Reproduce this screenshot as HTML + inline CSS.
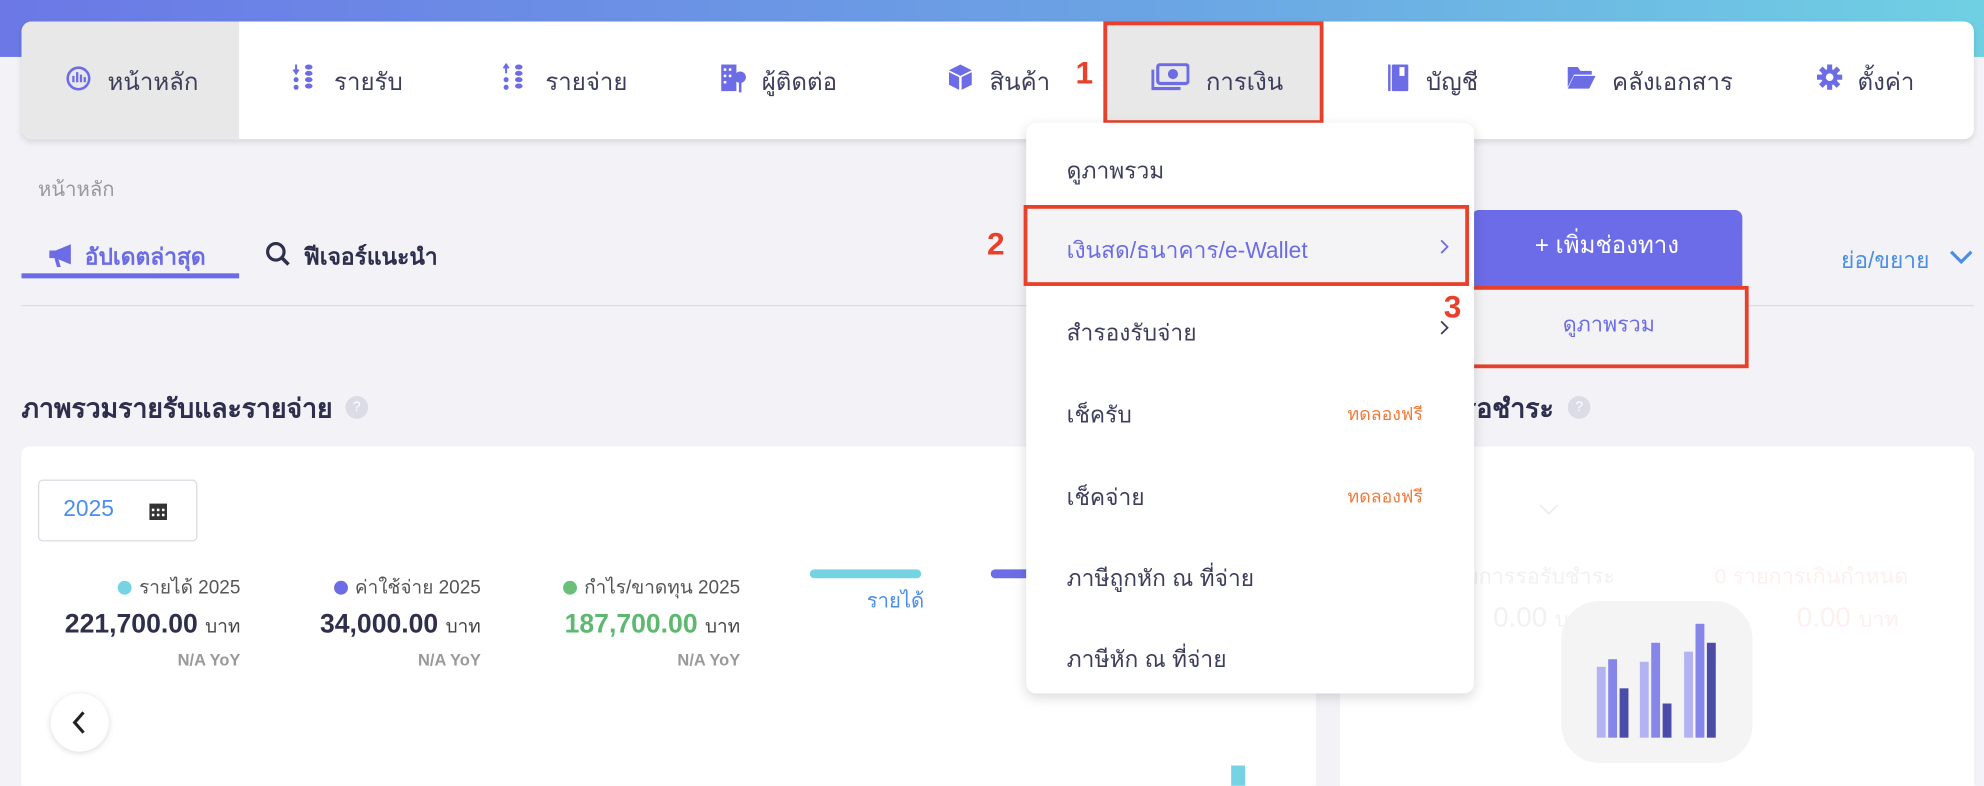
<!DOCTYPE html>
<html><head><meta charset="utf-8">
<style>
*{margin:0;padding:0;box-sizing:border-box}
html,body{width:1984px;height:786px;overflow:hidden;background:#f3f3f7;font-family:"Liberation Sans","DejaVu Sans","Noto Sans CJK SC",sans-serif}
#w{position:absolute;left:0;top:0;width:1568px;height:621px;transform:scale(1.26531);transform-origin:0 0;overflow:hidden}
.a{position:absolute;white-space:nowrap}
.nav{font-size:19px;color:#3d3d5c;top:50px}
.ic{position:absolute;color:#6c6ce6}
.red{position:absolute;border:3px solid #e8402a}
.num{position:absolute;color:#e8402a;font-weight:bold;font-size:25px}
.dd{font-size:18px;color:#3d3d5c;left:843px}
.lab{font-size:15px;color:#555;top:452px;text-align:right}
.val{font-size:21px;font-weight:bold;color:#2e2e4d;top:482px;text-align:right}
.val small{font-size:15px;font-weight:normal;color:#444}
.yoy{font-size:13px;color:#999;font-weight:bold;top:514px;text-align:right}
.dot{display:inline-block;width:11px;height:11px;border-radius:50%;margin-right:6px;vertical-align:-1px}
.bar{position:absolute;width:7px}
</style></head><body><div id="w">
<div class="a" style="left:0;top:0;width:1568px;height:45px;background:linear-gradient(90deg,#6b78e6,#6ba6e4 60%,#6fd0e3)"></div>
<div class="a" style="left:17px;top:17px;width:1543px;height:93px;background:#fff;border-radius:8px;box-shadow:0 2px 5px rgba(0,0,0,.12)"></div>
<div class="a" style="left:17px;top:17px;width:172px;height:93px;background:#e8e8e8;border-radius:8px 0 0 8px"></div>
<div class="a" style="left:872px;top:17px;width:173px;height:80px;background:#e8e8e8"></div>
<svg class="ic" style="left:52px;top:51px" width="20" height="22" viewBox="0 0 20 22"><circle cx="10" cy="11" r="8.5" fill="none" stroke="#6c6ce6" stroke-width="2"/><path d="M6 9v5M9 6v8M12 8v6M15 10v4" stroke="#6c6ce6" stroke-width="1.8"/></svg>
<svg class="ic" style="left:231px;top:50px" width="18" height="22" viewBox="0 0 18 22"><path d="M3 1v6M1 5l2 3 2-3" stroke="#6c6ce6" stroke-width="1.6" fill="none"/><circle cx="3" cy="13" r="2" fill="#6c6ce6"/><circle cx="3" cy="19" r="2" fill="#6c6ce6"/><g fill="#6c6ce6"><ellipse cx="13" cy="3" rx="3" ry="2"/><ellipse cx="13" cy="8" rx="3" ry="2"/><ellipse cx="13" cy="13" rx="3" ry="2"/><ellipse cx="13" cy="18" rx="3" ry="2"/></g></svg>
<svg class="ic" style="left:397px;top:50px" width="18" height="22" viewBox="0 0 18 22"><path d="M3 8V2M1 4l2-3 2 3" stroke="#6c6ce6" stroke-width="1.6" fill="none"/><circle cx="3" cy="13" r="2" fill="#6c6ce6"/><circle cx="3" cy="19" r="2" fill="#6c6ce6"/><g fill="#6c6ce6"><ellipse cx="13" cy="3" rx="3" ry="2"/><ellipse cx="13" cy="8" rx="3" ry="2"/><ellipse cx="13" cy="13" rx="3" ry="2"/><ellipse cx="13" cy="18" rx="3" ry="2"/></g></svg>
<svg class="ic" style="left:569px;top:50px" width="22" height="24" viewBox="0 0 22 24"><rect x="1" y="1" width="12" height="21" fill="#6c6ce6"/><g fill="#fff"><rect x="3" y="4" width="2" height="2"/><rect x="7" y="4" width="2" height="2"/><rect x="3" y="9" width="2" height="2"/><rect x="7" y="9" width="2" height="2"/><rect x="3" y="14" width="2" height="2"/></g><circle cx="16" cy="11" r="4.5" fill="#6c6ce6"/><path d="M16 14v9" stroke="#6c6ce6" stroke-width="2"/></svg>
<svg class="ic" style="left:749px;top:50px" width="20" height="22" viewBox="0 0 20 22"><path d="M10 1l9 4.5-9 4.5-9-4.5z" fill="#6c6ce6"/><path d="M1 7l8 4v10l-8-4zM19 7l-8 4v10l8-4z" fill="#6c6ce6"/></svg>
<svg class="ic" style="left:910px;top:50px" width="30" height="22" viewBox="0 0 30 22"><rect x="5" y="1" width="24" height="15" rx="2" fill="none" stroke="#6c6ce6" stroke-width="2.5"/><circle cx="17" cy="8.5" r="4" fill="#6c6ce6"/><path d="M1 5v15h22" fill="none" stroke="#6c6ce6" stroke-width="2.5"/></svg>
<svg class="ic" style="left:1097px;top:50px" width="17" height="23" viewBox="0 0 17 23"><rect x="3" y="1" width="13" height="21" rx="1" fill="#6c6ce6"/><rect x="0" y="1" width="2" height="21" fill="#6c6ce6"/><rect x="9" y="3" width="4" height="7" fill="#fff"/></svg>
<svg class="ic" style="left:1238px;top:51px" width="24" height="20" viewBox="0 0 24 20"><path d="M1 2h8l2 3h9v3H6L1 18z" fill="#6c6ce6"/><path d="M6 9h17l-5 10H1z" fill="#6c6ce6"/></svg>
<svg class="ic" style="left:1436px;top:51px" width="20" height="20" viewBox="0 0 20 20"><circle cx="10" cy="10" r="6.5" fill="#6c6ce6"/><g stroke="#6c6ce6" stroke-width="4"><path d="M10 0v20M0 10h20M3 3l14 14M17 3L3 17"/></g><circle cx="10" cy="10" r="3" fill="#fff"/></svg>
<div class="a nav" style="left:85px">หน้าหลัก</div>
<div class="a nav" style="left:264px">รายรับ</div>
<div class="a nav" style="left:431px">รายจ่าย</div>
<div class="a nav" style="left:602px">ผู้ติดต่อ</div>
<div class="a nav" style="left:782px">สินค้า</div>
<div class="a nav" style="left:953px">การเงิน</div>
<div class="a nav" style="left:1127px">บัญชี</div>
<div class="a nav" style="left:1274px">คลังเอกสาร</div>
<div class="a nav" style="left:1468px">ตั้งค่า</div>
<div class="red" style="left:872px;top:17px;width:174px;height:81px"></div>
<div class="num" style="left:850px;top:44px">1</div>
<div class="a" style="left:30px;top:138px;font-size:16px;color:#999">หน้าหลัก</div>
<svg class="a" style="left:38px;top:192px" width="22" height="20" viewBox="0 0 22 20"><path d="M1 6h5l12-5v16L6 12H1z" fill="#6c6ce6"/><path d="M5 12l2 7h3l-2-7" fill="#6c6ce6"/></svg>
<div class="a" style="left:67px;top:188px;font-size:18px;font-weight:bold;color:#6c6ce6">อัปเดตล่าสุด</div>
<div class="a" style="left:17px;top:216px;width:172px;height:4px;background:#6c6ce6"></div>
<svg class="a" style="left:209px;top:190px" width="22" height="22" viewBox="0 0 22 22"><circle cx="9" cy="9" r="6.5" fill="none" stroke="#2e2e4d" stroke-width="2.5"/><path d="M14 14l5 5" stroke="#2e2e4d" stroke-width="2.8"/></svg>
<div class="a" style="left:240px;top:188px;font-size:18px;font-weight:bold;color:#2e2e4d">ฟีเจอร์แนะนำ</div>
<div class="a" style="left:17px;top:241px;width:1543px;height:1px;background:#dcdce2"></div>
<div class="a" style="left:1455px;top:191px;font-size:18px;color:#4a8ee8">ย่อ/ขยาย</div>
<svg class="a" style="left:1540px;top:196px" width="20" height="14" viewBox="0 0 20 14"><path d="M2 3l8 8 8-8" fill="none" stroke="#4a8ee8" stroke-width="2.5"/></svg>
<div class="a" style="left:1163px;top:166px;width:214px;height:62px;background:#6c6ce8;border-radius:6px 6px 0 0;color:#fff;font-size:19px;text-align:center;line-height:58px">+ เพิ่มช่องทาง</div>
<div class="a" style="left:1163px;top:228px;width:217px;height:62px;background:#f3f3f6;color:#6c6ce6;font-size:17px;text-align:center;line-height:58px">ดูภาพรวม</div>
<div class="red" style="left:1161px;top:226px;width:221px;height:65px"></div>
<div class="a" style="left:17px;top:307px;font-size:21px;font-weight:bold;color:#2e2e4d">ภาพรวมรายรับและรายจ่าย</div>
<div class="a" style="left:273px;top:313px;width:18px;height:18px;border-radius:50%;background:#dcdce6;color:#fff;font-size:11px;text-align:center;line-height:18px">?</div>
<div class="a" style="right:340px;top:307px;font-size:21px;font-weight:bold;color:#2e2e4d">ภาพรวมรายการรอชำระ</div>
<div class="a" style="left:1239px;top:313px;width:18px;height:18px;border-radius:50%;background:#dcdce6;color:#fff;font-size:11px;text-align:center;line-height:18px">?</div>
<div class="a" style="left:17px;top:353px;width:1023px;height:280px;background:#fff;border-radius:6px"></div>
<div class="a" style="left:1059px;top:353px;width:501px;height:280px;background:#fff;border-radius:6px"></div>
<div class="a" style="left:30px;top:379px;width:126px;height:49px;border:1px solid #dcdce2;border-radius:4px"></div>
<div class="a" style="left:50px;top:392px;font-size:18px;color:#4a8ef0">2025</div>
<svg class="a" style="left:118px;top:396px" width="14" height="15" viewBox="0 0 14 15"><rect x="0" y="2" width="14" height="13" fill="#333"/><g fill="#fff"><rect x="2" y="6" width="2" height="2"/><rect x="6" y="6" width="2" height="2"/><rect x="10" y="6" width="2" height="2"/><rect x="2" y="10" width="2" height="2"/><rect x="6" y="10" width="2" height="2"/><rect x="10" y="10" width="2" height="2"/></g></svg>
<div class="a lab" style="right:1378px"><span class="dot" style="background:#76d3e4"></span>รายได้ 2025</div>
<div class="a lab" style="right:1188px"><span class="dot" style="background:#6c6ce6"></span>ค่าใช้จ่าย 2025</div>
<div class="a lab" style="right:983px"><span class="dot" style="background:#6bbf7a"></span>กำไร/ขาดทุน 2025</div>
<div class="a val" style="right:1378px">221,700.00 <small>บาท</small></div>
<div class="a val" style="right:1188px">34,000.00 <small>บาท</small></div>
<div class="a val" style="right:983px;color:#5cb96f">187,700.00 <small>บาท</small></div>
<div class="a yoy" style="right:1378px">N/A YoY</div>
<div class="a yoy" style="right:1188px">N/A YoY</div>
<div class="a yoy" style="right:983px">N/A YoY</div>
<div class="a" style="left:640px;top:450px;width:88px;height:7px;border-radius:4px;background:#76d3e4"></div>
<div class="a" style="left:685px;top:463px;font-size:16px;color:#4a8ef0">รายได้</div>
<div class="a" style="left:783px;top:450px;width:60px;height:7px;border-radius:4px;background:#6c6ce6"></div>
<div class="a" style="left:40px;top:548px;width:46px;height:46px;border-radius:50%;background:#fff;box-shadow:0 1px 5px rgba(0,0,0,.15)"></div>
<svg class="a" style="left:55px;top:560px" width="16" height="22" viewBox="0 0 16 22"><path d="M11 3L4 11l7 8" fill="none" stroke="#222" stroke-width="2.5"/></svg>
<div class="a" style="left:973px;top:605px;width:11px;height:20px;background:#76d3e4"></div>
<svg class="a" style="left:1216px;top:398px" width="16" height="10" viewBox="0 0 16 10"><path d="M1 1l7 7 7-7" fill="none" stroke="#eee" stroke-width="1.5"/></svg>
<div class="a" style="left:1140px;top:442px;font-size:17px;color:#f1f1f1">รายการรอรับชำระ</div>
<div class="a" style="left:1355px;top:442px;font-size:17px;color:#fdf0ee">0 รายการเกินกำหนด</div>
<div class="a" style="left:1180px;top:475px;font-size:22px;color:#f1f1f1">0.00 <span style="font-size:17px">บาท</span></div>
<div class="a" style="left:1420px;top:475px;font-size:22px;color:#fdf0ee">0.00 <span style="font-size:17px">บาท</span></div>
<div class="a" style="left:1234px;top:475px;width:151px;height:128px;border-radius:30px;background:#f4f4f4"></div>
<div class="bar" style="left:1262px;top:527px;height:56px;background:#b3b3f3"></div>
<div class="bar" style="left:1271px;top:521px;height:62px;background:#8585ea"></div>
<div class="bar" style="left:1280px;top:544px;height:39px;background:#4b4ba8"></div>
<div class="bar" style="left:1296px;top:523px;height:60px;background:#b3b3f3"></div>
<div class="bar" style="left:1305px;top:508px;height:75px;background:#8585ea"></div>
<div class="bar" style="left:1314px;top:556px;height:27px;background:#4b4ba8"></div>
<div class="bar" style="left:1331px;top:515px;height:68px;background:#b3b3f3"></div>
<div class="bar" style="left:1340px;top:493px;height:90px;background:#8585ea"></div>
<div class="bar" style="left:1349px;top:508px;height:75px;background:#4b4ba8"></div>
<div class="a" style="left:811px;top:97px;width:354px;height:451px;background:#fff;border-radius:8px;box-shadow:0 3px 10px rgba(0,0,0,.15)"></div>
<div class="a dd" style="top:120px">ดูภาพรวม</div>
<div class="a" style="left:811px;top:164px;width:350px;height:60px;background:#f4f4f6"></div>
<div class="a dd" style="top:183px;color:#6c6ce6">เงินสด/ธนาคาร/e-Wallet</div>
<svg class="a" style="left:1137px;top:188px" width="9" height="14" viewBox="0 0 9 14"><path d="M2 2l5 5-5 5" fill="none" stroke="#6c6ce6" stroke-width="1.4"/></svg>
<div class="red" style="left:809px;top:162px;width:352px;height:64px"></div>
<div class="num" style="left:780px;top:179px">2</div>
<div class="a dd" style="top:248px">สำรองรับจ่าย</div>
<svg class="a" style="left:1137px;top:252px" width="9" height="14" viewBox="0 0 9 14"><path d="M2 2l5 5-5 5" fill="none" stroke="#3d3d5c" stroke-width="1.4"/></svg>
<div class="a dd" style="top:313px">เช็ครับ</div>
<div class="a" style="left:1065px;top:317px;font-size:14px;color:#f07a3a">ทดลองฟรี</div>
<div class="a dd" style="top:378px">เช็คจ่าย</div>
<div class="a" style="left:1065px;top:382px;font-size:14px;color:#f07a3a">ทดลองฟรี</div>
<div class="a dd" style="top:442px">ภาษีถูกหัก ณ ที่จ่าย</div>
<div class="a dd" style="top:506px">ภาษีหัก ณ ที่จ่าย</div>
<div class="num" style="left:1141px;top:229px">3</div>
</div></body></html>
